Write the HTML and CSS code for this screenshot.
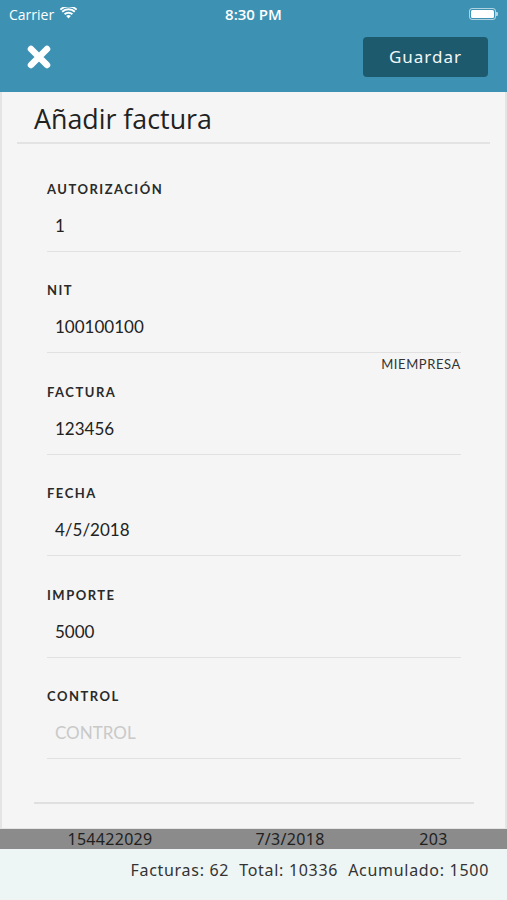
FILE: index.html
```html
<!DOCTYPE html>
<html>
<head>
    <title>Añadir factura</title>
    <link rel="stylesheet" href="styles.css">
</head>
<body>
    <div class="top">
        <div class="status">
            <div class="carrier">
                Carrier
                <svg class="wifi" width="17" height="12" viewBox="0 0 17 12">
                    <path d="M8.5 11.5 L6.2 9 A3.3 3.3 0 0 1 10.8 9 Z" fill="#fff"/>
                    <path d="M4.6 7.3 A5.6 5.6 0 0 1 12.4 7.3" stroke="#fff" stroke-width="1.9" fill="none"/>
                    <path d="M2.2 4.8 A9 9 0 0 1 14.8 4.8" stroke="#fff" stroke-width="1.9" fill="none"/>
                    <path d="M0.4 2.6 A12 12 0 0 1 16.6 2.6" stroke="#fff" stroke-width="1.7" fill="none"/>
                </svg>
            </div>
            <div class="time">8:30 PM</div>
            <div class="battery">
                <div class="battery-body"><div class="battery-level"></div></div>
                <div class="battery-tip"></div>
            </div>
        </div>
        <div class="nav">
            <svg class="close" width="26" height="26" viewBox="0 0 26 26">
                <path d="M5 5 L21 21 M21 5 L5 21" stroke="#fff" stroke-width="6.5" stroke-linecap="round"/>
            </svg>
            <button class="save">Guardar</button>
        </div>
    </div>

    <div class="card">
        <h1 class="title">Añadir factura</h1>

        <div class="fields">
            <div class="field">
                <div class="label">AUTORIZACIÓN</div>
                <div class="value">1</div>
            </div>
            <div class="field has-hint">
                <div class="label">NIT</div>
                <div class="value">100100100</div>
            </div>
            <div class="hint">MIEMPRESA</div>
            <div class="field">
                <div class="label">FACTURA</div>
                <div class="value">123456</div>
            </div>
            <div class="field">
                <div class="label">FECHA</div>
                <div class="value">4/5/2018</div>
            </div>
            <div class="field">
                <div class="label">IMPORTE</div>
                <div class="value">5000</div>
            </div>
            <div class="field">
                <div class="label">CONTROL</div>
                <div class="value placeholder">CONTROL</div>
            </div>
        </div>

        <div class="card-end"></div>
    </div>

    <div class="last-row">
        <span class="col-a">154422029</span>
        <span class="col-b">7/3/2018</span>
        <span class="col-c">203</span>
    </div>

    <div class="footer">
        <span>Facturas: 62</span>
        <span>Total: 10336</span>
        <span>Acumulado: 1500</span>
    </div>
</body>
</html>
```

FILE: styles.css
```css
* {
    box-sizing: border-box;
}

body {
    margin: 0;
    height: 900px;
    display: flex;
    flex-direction: column;
    font-family: Lato, "Open Sans", sans-serif;
    background-color: #e4e4e4;
    overflow: hidden;
}

.top {
    background-color: #3d92b4;
    height: 92px;
    color: #fff;
}

.status {
    height: 28px;
    display: flex;
    align-items: center;
    justify-content: space-between;
    padding: 0 9px 0 9px;
    font-family: "Open Sans", sans-serif;
}

.carrier {
    display: flex;
    align-items: center;
    gap: 6px;
    font-size: 14px;
    width: 120px;
}

.wifi {
    margin-top: -2px;
}

.time {
    font-size: 15px;
    font-weight: 600;
}

.battery {
    width: 120px;
    display: flex;
    justify-content: flex-end;
    align-items: center;
}

.battery-body {
    width: 27px;
    height: 12px;
    border: 1px solid rgba(255, 255, 255, 0.6);
    border-radius: 3px;
    padding: 1px;
}

.battery-level {
    width: 100%;
    height: 100%;
    background-color: #fff;
    border-radius: 1.5px;
}

.battery-tip {
    width: 2px;
    height: 4px;
    background-color: rgba(255, 255, 255, 0.6);
    border-radius: 0 1px 1px 0;
}

.nav {
    height: 64px;
    display: flex;
    align-items: center;
    justify-content: space-between;
    padding: 0 19px 7px 26px;
}

.save {
    width: 125px;
    height: 40px;
    background-color: #1d5a6e;
    color: #f2f7f8;
    border: none;
    border-radius: 4px;
    font-family: "Noto Sans", sans-serif;
    font-size: 17px;
    letter-spacing: 1px;
}

.card {
    flex: 1;
    margin: 0 2px;
    background-color: #f5f5f5;
    display: flex;
    flex-direction: column;
}

.title {
    margin: 0 15px;
    padding: 10px 0 6px 17px;
    font-family: "Open Sans", sans-serif;
    font-weight: 400;
    font-size: 26.8px;
    line-height: 34px;
    color: #222;
    border-bottom: 2px solid #e3e3e3;
}

.fields {
    padding: 35px 44px 0 45px;
}

.field {
    border-bottom: 1px solid #e1e1e1;
    padding-bottom: 13px;
    margin-bottom: 28.4px;
}

.field.has-hint {
    margin-bottom: 3px;
}

.label {
    font-size: 13px;
    line-height: 20px;
    font-weight: 700;
    letter-spacing: 1.5px;
    color: #2a2a2a;
}

.value {
    margin-top: 15px;
    padding-left: 8px;
    font-size: 17px;
    line-height: 24px;
    color: #222;
}

.value.placeholder {
    color: #c9c9c9;
}

.hint {
    text-align: right;
    font-size: 13px;
    line-height: 16px;
    letter-spacing: 0.6px;
    color: #333;
    margin-bottom: 9.4px;
}

.card-end {
    margin: 15px 31px 0 32px;
    border-top: 2px solid #e0e0e0;
}

.last-row {
    height: 20px;
    background-color: #8b8b8b;
    display: grid;
    grid-template-columns: 220px 140px 1fr;
    text-align: center;
    font-family: "Noto Sans", sans-serif;
    font-size: 16px;
    line-height: 20px;
    letter-spacing: 0.3px;
    color: #1f1f1f;
    margin-top: 1px;
}

.footer {
    height: 51px;
    background-color: #eef5f5;
    display: flex;
    justify-content: flex-end;
    gap: 10px;
    padding: 10px 18px 0 0;
    font-family: "Noto Sans", sans-serif;
    font-size: 16px;
    letter-spacing: 0.7px;
    color: #333;
}
```
